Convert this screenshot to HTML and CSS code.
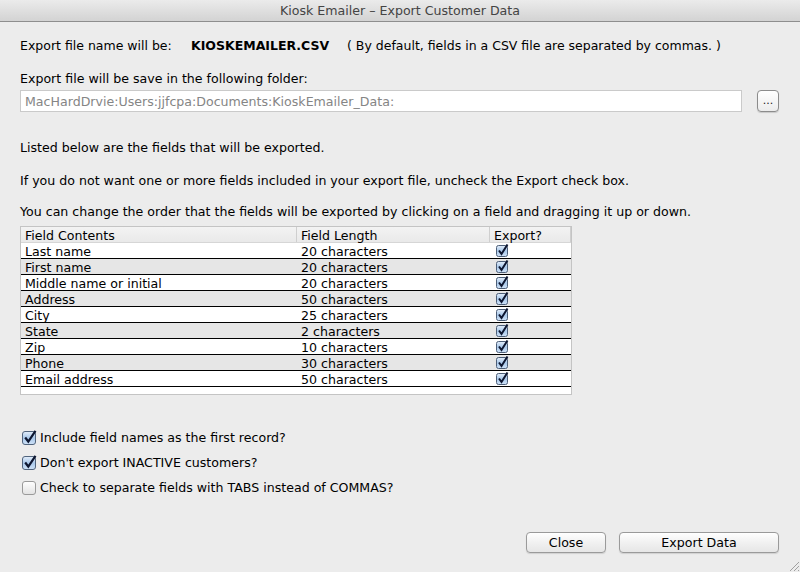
FILE: index.html
```html
<!DOCTYPE html>
<html lang="en">
<head>
  <meta charset="UTF-8" />
  <title>Kiosk Emailer - Export Customer Data</title>
  <link rel="stylesheet" href="styles.css">
</head>
<body>

<svg class="defs" width="0" height="0">
  <defs>
    <linearGradient id="boxOn" x1="0" y1="0" x2="0" y2="1">
      <stop offset="0" stop-color="#e4eefa"/>
      <stop offset="0.5" stop-color="#a9c8ea"/>
      <stop offset="1" stop-color="#cfe2f7"/>
    </linearGradient>
    <linearGradient id="boxOff" x1="0" y1="0" x2="0" y2="1">
      <stop offset="0" stop-color="#ffffff"/>
      <stop offset="1" stop-color="#e2e2e2"/>
    </linearGradient>
  </defs>
</svg>

<div class="window">
  <!-- title bar -->
  <div class="titlebar">Kiosk Emailer – Export Customer Data</div>

  <div class="content">
    <div class="file-row">
      <span class="file-label">Export file name will be:</span>
      <span class="file-name">KIOSKEMAILER.CSV</span>
      <span class="file-note">( By default, fields in a CSV file are separated by commas. )</span>
    </div>

    <div class="folder-label">Export file will be save in the following folder:</div>
    <div class="folder-row">
      <input class="folder-input" type="text" value="MacHardDrvie:Users:jjfcpa:Documents:KioskEmailer_Data:" readonly>
      <button class="browse-btn">...</button>
    </div>

    <p class="info first">Listed below are the fields that will be exported.</p>
    <p class="info">If you do not want one or more fields included in your export file, uncheck the Export check box.</p>
    <p class="info">You can change the order that the fields will be exported by clicking on a field and dragging it up or down.</p>

    <!-- fields list -->
    <div class="fields">
      <div class="fields__head">
        <span class="col col--name">Field Contents</span>
        <span class="col col--len">Field Length</span>
        <span class="col col--exp">Export?</span>
      </div>
      <div class="fields__row"><span class="col col--name">Last name</span><span class="col col--len">20 characters</span><span class="col col--exp"><svg class="tick" viewBox="0 0 13 13"><rect x="0.5" y="1.5" width="11" height="11" rx="2" fill="url(#boxOn)" stroke="#4d5f78"/><path d="M3 6.5 L5.5 10 L11.5 0.5" stroke="#0d1630" stroke-width="2" fill="none"/></svg></span></div>
      <div class="fields__row alt"><span class="col col--name">First name</span><span class="col col--len">20 characters</span><span class="col col--exp"><svg class="tick" viewBox="0 0 13 13"><rect x="0.5" y="1.5" width="11" height="11" rx="2" fill="url(#boxOn)" stroke="#4d5f78"/><path d="M3 6.5 L5.5 10 L11.5 0.5" stroke="#0d1630" stroke-width="2" fill="none"/></svg></span></div>
      <div class="fields__row"><span class="col col--name">Middle name or initial</span><span class="col col--len">20 characters</span><span class="col col--exp"><svg class="tick" viewBox="0 0 13 13"><rect x="0.5" y="1.5" width="11" height="11" rx="2" fill="url(#boxOn)" stroke="#4d5f78"/><path d="M3 6.5 L5.5 10 L11.5 0.5" stroke="#0d1630" stroke-width="2" fill="none"/></svg></span></div>
      <div class="fields__row alt"><span class="col col--name">Address</span><span class="col col--len">50 characters</span><span class="col col--exp"><svg class="tick" viewBox="0 0 13 13"><rect x="0.5" y="1.5" width="11" height="11" rx="2" fill="url(#boxOn)" stroke="#4d5f78"/><path d="M3 6.5 L5.5 10 L11.5 0.5" stroke="#0d1630" stroke-width="2" fill="none"/></svg></span></div>
      <div class="fields__row"><span class="col col--name">City</span><span class="col col--len">25 characters</span><span class="col col--exp"><svg class="tick" viewBox="0 0 13 13"><rect x="0.5" y="1.5" width="11" height="11" rx="2" fill="url(#boxOn)" stroke="#4d5f78"/><path d="M3 6.5 L5.5 10 L11.5 0.5" stroke="#0d1630" stroke-width="2" fill="none"/></svg></span></div>
      <div class="fields__row alt"><span class="col col--name">State</span><span class="col col--len">2 characters</span><span class="col col--exp"><svg class="tick" viewBox="0 0 13 13"><rect x="0.5" y="1.5" width="11" height="11" rx="2" fill="url(#boxOn)" stroke="#4d5f78"/><path d="M3 6.5 L5.5 10 L11.5 0.5" stroke="#0d1630" stroke-width="2" fill="none"/></svg></span></div>
      <div class="fields__row"><span class="col col--name">Zip</span><span class="col col--len">10 characters</span><span class="col col--exp"><svg class="tick" viewBox="0 0 13 13"><rect x="0.5" y="1.5" width="11" height="11" rx="2" fill="url(#boxOn)" stroke="#4d5f78"/><path d="M3 6.5 L5.5 10 L11.5 0.5" stroke="#0d1630" stroke-width="2" fill="none"/></svg></span></div>
      <div class="fields__row alt"><span class="col col--name">Phone</span><span class="col col--len">30 characters</span><span class="col col--exp"><svg class="tick" viewBox="0 0 13 13"><rect x="0.5" y="1.5" width="11" height="11" rx="2" fill="url(#boxOn)" stroke="#4d5f78"/><path d="M3 6.5 L5.5 10 L11.5 0.5" stroke="#0d1630" stroke-width="2" fill="none"/></svg></span></div>
      <div class="fields__row"><span class="col col--name">Email address</span><span class="col col--len">50 characters</span><span class="col col--exp"><svg class="tick" viewBox="0 0 13 13"><rect x="0.5" y="1.5" width="11" height="11" rx="2" fill="url(#boxOn)" stroke="#4d5f78"/><path d="M3 6.5 L5.5 10 L11.5 0.5" stroke="#0d1630" stroke-width="2" fill="none"/></svg></span></div>
      <div class="fields__end"></div>
    </div>

    <!-- options -->
    <div class="options">
      <label class="opt"><svg class="box" viewBox="0 0 15 15"><rect x="0.5" y="1.5" width="13" height="13" rx="2.5" fill="url(#boxOn)" stroke="#51647d"/><path d="M3.2 7.5 L6.3 11.5 L13.5 0.8" stroke="#0d1630" stroke-width="2.2" fill="none"/></svg>Include field names as the first record?</label>
      <label class="opt"><svg class="box" viewBox="0 0 15 15"><rect x="0.5" y="1.5" width="13" height="13" rx="2.5" fill="url(#boxOn)" stroke="#51647d"/><path d="M3.2 7.5 L6.3 11.5 L13.5 0.8" stroke="#0d1630" stroke-width="2.2" fill="none"/></svg>Don't export INACTIVE customers?</label>
      <label class="opt"><svg class="box" viewBox="0 0 15 15"><rect x="0.5" y="1.5" width="13" height="13" rx="2.5" fill="url(#boxOff)" stroke="#9a9a9a"/></svg>Check to separate fields with TABS instead of COMMAS?</label>
    </div>

    <div class="actions">
      <button class="btn btn--close">Close</button>
      <button class="btn btn--export">Export Data</button>
    </div>
  </div>

  <svg class="grip" viewBox="0 0 14 14"><path d="M13 4 L4 13 M13 8 L8 13 M13 12 L12 13" stroke="#a0a0a0" stroke-width="1"/></svg>
</div>

</body>
</html>
```

FILE: styles.css
```css
* {
  margin: 0;
  padding: 0;
  box-sizing: border-box;
}

body {
  background: #ececec;
  font-family: "DejaVu Sans", sans-serif;
  font-size: 12.6px;
  color: #000;
}

.defs {
  position: absolute;
}

.window {
  position: relative;
  width: 800px;
  height: 572px;
  background: #ececec;
  overflow: hidden;
}

.titlebar {
  height: 22px;
  line-height: 21px;
  text-align: center;
  color: #444;
  font-size: 12.6px;
  background: linear-gradient(#ebebeb, #d3d3d3);
  border-bottom: 1px solid #8e8e8e;
}

.content {
  padding: 0 21px 0 20px;
}

.file-row {
  margin-top: 16px;
  line-height: 16px;
  display: flex;
}

.file-row span {
  font-size: 12.5px;
}

.file-label {
  width: 171px;
}

.file-name {
  font-weight: bold;
  width: 156px;
}

.folder-label {
  margin-top: 17px;
  line-height: 16px;
}

.folder-row {
  margin-top: 3px;
  display: flex;
  gap: 15px;
}

.folder-input {
  flex: 1;
  height: 22px;
  border: 1px solid #cacaca;
  background: #fff;
  color: #858585;
  font-family: inherit;
  font-size: 12.6px;
  padding: 0 4px;
  outline: none;
}

.browse-btn {
  width: 22px;
  height: 22px;
  border: 1px solid #8c8c8c;
  border-radius: 4px;
  background: linear-gradient(#ffffff, #ececec);
  font-family: inherit;
  font-size: 11px;
  line-height: 18px;
  color: #222;
  box-shadow: 0 1px 1px rgba(0, 0, 0, 0.15);
}

.info {
  line-height: 16px;
  margin-top: 17px;
}

.info.first {
  margin-top: 28px;
}

.info:last-of-type {
  margin-top: 15px;
}

.fields {
  margin-top: 6px;
  width: 552px;
  border: 1px solid #c4c4c4;
  background: #fff;
  font-size: 12.6px;
}

.fields__head,
.fields__row {
  display: flex;
  height: 16px;
  line-height: 17px;
}

.fields__head {
  background: linear-gradient(#f3f3f3, #e9e9e9);
  border-bottom: 1px solid #d6d6d6;
}

.fields__row {
  border-bottom: 1px solid #000;
  background: #fff;
}

.fields__row.alt {
  background: #e6e6e6;
}

.col {
  padding-left: 4px;
  white-space: nowrap;
}

.col--name {
  width: 276px;
}

.col--len {
  width: 193px;
}

.col--exp {
  flex: 1;
}

.fields__head .col {
  border-right: 1px solid #cfcfcf;
}

.fields__head .col--exp {
  flex: none;
  width: 81px;
}

.tick {
  width: 13px;
  height: 13px;
  margin-left: 2px;
  margin-top: 1px;
  vertical-align: top;
}

.fields__end {
  height: 7px;
}

.options {
  margin-top: 33px;
  display: flex;
  flex-direction: column;
  gap: 7px;
}

.opt {
  display: flex;
  align-items: center;
  height: 18px;
  padding-left: 2px;
  gap: 3px;
}

.box {
  width: 15px;
  height: 15px;
}

.actions {
  margin-top: 36px;
  display: flex;
  justify-content: flex-end;
  gap: 13px;
}

.btn {
  height: 21px;
  border: 1px solid #9a9a9a;
  border-radius: 4px;
  background: linear-gradient(#ffffff, #f1f1f1 50%, #e6e6e6);
  font-family: inherit;
  font-size: 12.6px;
  color: #000;
  box-shadow: 0 1px 1px rgba(0, 0, 0, 0.12);
}

.btn--close {
  width: 80px;
}

.btn--export {
  width: 160px;
}

.grip {
  position: absolute;
  right: 0;
  bottom: 0;
  width: 14px;
  height: 14px;
}
```
